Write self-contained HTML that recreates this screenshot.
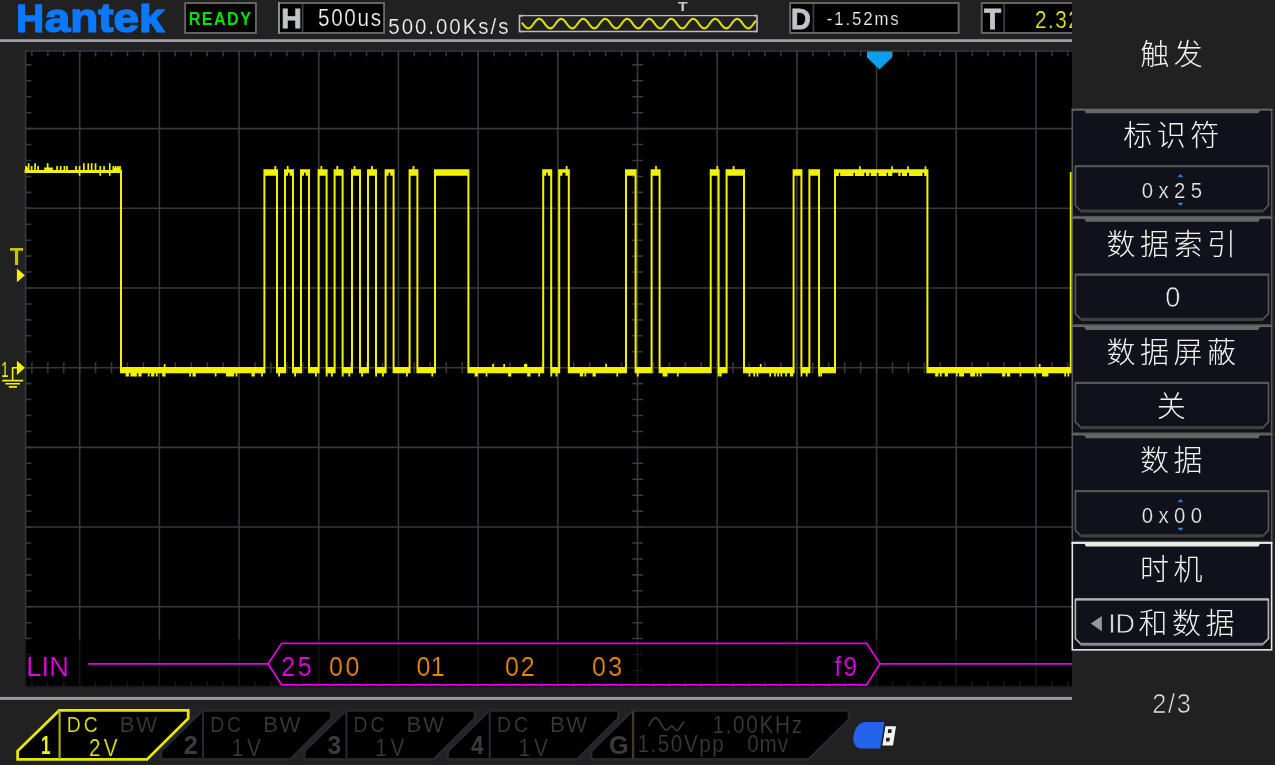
<!DOCTYPE html>
<html lang="zh">
<head>
<meta charset="utf-8">
<title>Hantek LIN trigger</title>
<style>
html,body{margin:0;padding:0;background:#212121;overflow:hidden;}
body{width:1275px;height:765px;position:relative;font-family:"Liberation Sans","Noto Sans CJK SC",sans-serif;}
svg{position:absolute;left:0;top:0;display:block;will-change:transform;}
text{font-family:"Liberation Sans","Noto Sans CJK SC",sans-serif;font-kerning:none;white-space:pre;}
.cjk{font-weight:300;fill:#f2f2f2;font-size:29px;letter-spacing:4.5px;text-anchor:middle;}
</style>
</head>
<body>
<svg width="1275" height="765" viewBox="0 0 1275 765">

<rect x="0" y="0" width="1275" height="765" fill="#212121"/>
<rect x="25.6" y="50.9" width="1046.4" height="635.4" fill="#000"/>
<g stroke="#37393d" stroke-width="1.55" fill="none">
<line x1="79.69" y1="50.9" x2="79.69" y2="686.3"/>
<line x1="159.38" y1="50.9" x2="159.38" y2="686.3"/>
<line x1="239.06" y1="50.9" x2="239.06" y2="686.3"/>
<line x1="318.75" y1="50.9" x2="318.75" y2="686.3"/>
<line x1="398.44" y1="50.9" x2="398.44" y2="686.3"/>
<line x1="478.12" y1="50.9" x2="478.12" y2="686.3"/>
<line x1="557.81" y1="50.9" x2="557.81" y2="686.3"/>
<line x1="637.50" y1="50.9" x2="637.50" y2="686.3"/>
<line x1="717.19" y1="50.9" x2="717.19" y2="686.3"/>
<line x1="796.88" y1="50.9" x2="796.88" y2="686.3"/>
<line x1="876.56" y1="50.9" x2="876.56" y2="686.3"/>
<line x1="956.25" y1="50.9" x2="956.25" y2="686.3"/>
<line x1="1035.94" y1="50.9" x2="1035.94" y2="686.3"/>
<line x1="25.6" y1="128.64" x2="1072" y2="128.64"/>
<line x1="25.6" y1="208.32" x2="1072" y2="208.32"/>
<line x1="25.6" y1="288.01" x2="1072" y2="288.01"/>
<line x1="25.6" y1="367.70" x2="1072" y2="367.70"/>
<line x1="25.6" y1="447.39" x2="1072" y2="447.39"/>
<line x1="25.6" y1="527.08" x2="1072" y2="527.08"/>
<line x1="25.6" y1="606.76" x2="1072" y2="606.76"/>
<line x1="25.6" y1="50.9" x2="1072" y2="50.9"/>
<line x1="25.6" y1="686.3" x2="1072" y2="686.3"/>
<line x1="25.6" y1="50.1" x2="25.6" y2="687.0999999999999"/>
<path d="M31.88 50.9v5.5M31.88 686.3v-5.2M31.88 362.2v11M47.81 50.9v5.5M47.81 686.3v-5.2M47.81 362.2v11M63.75 50.9v5.5M63.75 686.3v-5.2M63.75 362.2v11M79.69 50.9v5.5M79.69 686.3v-5.2M79.69 362.2v11M95.62 50.9v5.5M95.62 686.3v-5.2M95.62 362.2v11M111.56 50.9v5.5M111.56 686.3v-5.2M111.56 362.2v11M127.50 50.9v5.5M127.50 686.3v-5.2M127.50 362.2v11M143.44 50.9v5.5M143.44 686.3v-5.2M143.44 362.2v11M159.38 50.9v5.5M159.38 686.3v-5.2M159.38 362.2v11M175.31 50.9v5.5M175.31 686.3v-5.2M175.31 362.2v11M191.25 50.9v5.5M191.25 686.3v-5.2M191.25 362.2v11M207.19 50.9v5.5M207.19 686.3v-5.2M207.19 362.2v11M223.12 50.9v5.5M223.12 686.3v-5.2M223.12 362.2v11M239.06 50.9v5.5M239.06 686.3v-5.2M239.06 362.2v11M255.00 50.9v5.5M255.00 686.3v-5.2M255.00 362.2v11M270.94 50.9v5.5M270.94 686.3v-5.2M270.94 362.2v11M286.88 50.9v5.5M286.88 686.3v-5.2M286.88 362.2v11M302.81 50.9v5.5M302.81 686.3v-5.2M302.81 362.2v11M318.75 50.9v5.5M318.75 686.3v-5.2M318.75 362.2v11M334.69 50.9v5.5M334.69 686.3v-5.2M334.69 362.2v11M350.62 50.9v5.5M350.62 686.3v-5.2M350.62 362.2v11M366.56 50.9v5.5M366.56 686.3v-5.2M366.56 362.2v11M382.50 50.9v5.5M382.50 686.3v-5.2M382.50 362.2v11M398.44 50.9v5.5M398.44 686.3v-5.2M398.44 362.2v11M414.38 50.9v5.5M414.38 686.3v-5.2M414.38 362.2v11M430.31 50.9v5.5M430.31 686.3v-5.2M430.31 362.2v11M446.25 50.9v5.5M446.25 686.3v-5.2M446.25 362.2v11M462.19 50.9v5.5M462.19 686.3v-5.2M462.19 362.2v11M478.12 50.9v5.5M478.12 686.3v-5.2M478.12 362.2v11M494.06 50.9v5.5M494.06 686.3v-5.2M494.06 362.2v11M510.00 50.9v5.5M510.00 686.3v-5.2M510.00 362.2v11M525.94 50.9v5.5M525.94 686.3v-5.2M525.94 362.2v11M541.88 50.9v5.5M541.88 686.3v-5.2M541.88 362.2v11M557.81 50.9v5.5M557.81 686.3v-5.2M557.81 362.2v11M573.75 50.9v5.5M573.75 686.3v-5.2M573.75 362.2v11M589.69 50.9v5.5M589.69 686.3v-5.2M589.69 362.2v11M605.62 50.9v5.5M605.62 686.3v-5.2M605.62 362.2v11M621.56 50.9v5.5M621.56 686.3v-5.2M621.56 362.2v11M637.50 50.9v5.5M637.50 686.3v-5.2M637.50 362.2v11M653.44 50.9v5.5M653.44 686.3v-5.2M653.44 362.2v11M669.38 50.9v5.5M669.38 686.3v-5.2M669.38 362.2v11M685.31 50.9v5.5M685.31 686.3v-5.2M685.31 362.2v11M701.25 50.9v5.5M701.25 686.3v-5.2M701.25 362.2v11M717.19 50.9v5.5M717.19 686.3v-5.2M717.19 362.2v11M733.12 50.9v5.5M733.12 686.3v-5.2M733.12 362.2v11M749.06 50.9v5.5M749.06 686.3v-5.2M749.06 362.2v11M765.00 50.9v5.5M765.00 686.3v-5.2M765.00 362.2v11M780.94 50.9v5.5M780.94 686.3v-5.2M780.94 362.2v11M796.88 50.9v5.5M796.88 686.3v-5.2M796.88 362.2v11M812.81 50.9v5.5M812.81 686.3v-5.2M812.81 362.2v11M828.75 50.9v5.5M828.75 686.3v-5.2M828.75 362.2v11M844.69 50.9v5.5M844.69 686.3v-5.2M844.69 362.2v11M860.62 50.9v5.5M860.62 686.3v-5.2M860.62 362.2v11M876.56 50.9v5.5M876.56 686.3v-5.2M876.56 362.2v11M892.50 50.9v5.5M892.50 686.3v-5.2M892.50 362.2v11M908.44 50.9v5.5M908.44 686.3v-5.2M908.44 362.2v11M924.38 50.9v5.5M924.38 686.3v-5.2M924.38 362.2v11M940.31 50.9v5.5M940.31 686.3v-5.2M940.31 362.2v11M956.25 50.9v5.5M956.25 686.3v-5.2M956.25 362.2v11M972.19 50.9v5.5M972.19 686.3v-5.2M972.19 362.2v11M988.12 50.9v5.5M988.12 686.3v-5.2M988.12 362.2v11M1004.06 50.9v5.5M1004.06 686.3v-5.2M1004.06 362.2v11M1020.00 50.9v5.5M1020.00 686.3v-5.2M1020.00 362.2v11M1035.94 50.9v5.5M1035.94 686.3v-5.2M1035.94 362.2v11M1051.88 50.9v5.5M1051.88 686.3v-5.2M1051.88 362.2v11M1067.81 50.9v5.5M1067.81 686.3v-5.2M1067.81 362.2v11M25.6 64.89h5.8M632.1 64.89h10.8M25.6 80.82h5.8M632.1 80.82h10.8M25.6 96.76h5.8M632.1 96.76h10.8M25.6 112.70h5.8M632.1 112.70h10.8M25.6 128.64h5.8M632.1 128.64h10.8M25.6 144.57h5.8M632.1 144.57h10.8M25.6 160.51h5.8M632.1 160.51h10.8M25.6 176.45h5.8M632.1 176.45h10.8M25.6 192.39h5.8M632.1 192.39h10.8M25.6 208.32h5.8M632.1 208.32h10.8M25.6 224.26h5.8M632.1 224.26h10.8M25.6 240.20h5.8M632.1 240.20h10.8M25.6 256.14h5.8M632.1 256.14h10.8M25.6 272.07h5.8M632.1 272.07h10.8M25.6 288.01h5.8M632.1 288.01h10.8M25.6 303.95h5.8M632.1 303.95h10.8M25.6 319.89h5.8M632.1 319.89h10.8M25.6 335.82h5.8M632.1 335.82h10.8M25.6 351.76h5.8M632.1 351.76h10.8M25.6 367.70h5.8M632.1 367.70h10.8M25.6 383.64h5.8M632.1 383.64h10.8M25.6 399.57h5.8M632.1 399.57h10.8M25.6 415.51h5.8M632.1 415.51h10.8M25.6 431.45h5.8M632.1 431.45h10.8M25.6 447.39h5.8M632.1 447.39h10.8M25.6 463.32h5.8M632.1 463.32h10.8M25.6 479.26h5.8M632.1 479.26h10.8M25.6 495.20h5.8M632.1 495.20h10.8M25.6 511.14h5.8M632.1 511.14h10.8M25.6 527.08h5.8M632.1 527.08h10.8M25.6 543.01h5.8M632.1 543.01h10.8M25.6 558.95h5.8M632.1 558.95h10.8M25.6 574.89h5.8M632.1 574.89h10.8M25.6 590.83h5.8M632.1 590.83h10.8M25.6 606.76h5.8M632.1 606.76h10.8M25.6 622.70h5.8M632.1 622.70h10.8M25.6 638.64h5.8M632.1 638.64h10.8M25.6 654.58h5.8M632.1 654.58h10.8M25.6 670.51h5.8M632.1 670.51h10.8"/>
</g>
<rect x="24.8" y="639.2" width="1047.2" height="47.9" fill="#000" opacity="0.6"/>
<path fill="#f2f200" d="M24.6 170.1h97.4v2.9h-97.4zM27.8 163.3h1.7v7.0h-1.7zM34.2 163.3h1.7v7.0h-1.7zM46.8 163.3h1.7v7.0h-1.7zM83.0 163.3h1.7v7.0h-1.7zM87.4 163.3h1.7v7.0h-1.7zM90.8 163.3h1.7v7.0h-1.7zM94.7 163.3h1.7v7.0h-1.7zM108.9 163.3h1.7v7.0h-1.7zM25.3 165.9h1.7v4.4h-1.7zM30.8 165.9h1.7v4.4h-1.7zM37.2 165.9h1.7v4.4h-1.7zM56.2 165.9h1.7v4.4h-1.7zM59.8 165.9h1.7v4.4h-1.7zM63.6 165.9h1.7v4.4h-1.7zM66.2 165.9h1.7v4.4h-1.7zM75.2 165.9h1.7v4.4h-1.7zM78.7 165.9h1.7v4.4h-1.7zM99.4 165.9h1.7v4.4h-1.7zM103.2 165.9h1.7v4.4h-1.7zM112.4 165.9h1.7v4.4h-1.7zM114.8 165.9h1.7v4.4h-1.7zM117.2 165.9h1.7v4.4h-1.7zM119.2 165.9h1.7v4.4h-1.7zM44.2 167.4h8.6v2.9h-8.6zM112.4 167.4h8.0v2.9h-8.0zM25.0 167.4h4.4v2.9h-4.4zM78.7 172.8h1.7v3.0h-1.7zM99.4 172.8h1.7v3.0h-1.7zM108.9 172.8h1.7v3.0h-1.7zM120.0 367.1h145.4v6.1h-145.4zM125.6 373.0h1.7v3.4h-1.7zM127.2 373.0h1.7v3.4h-1.7zM130.4 373.0h1.7v3.4h-1.7zM132.0 373.0h1.7v3.4h-1.7zM133.6 373.0h1.7v3.4h-1.7zM135.2 373.0h1.7v3.4h-1.7zM138.3 373.0h1.7v3.4h-1.7zM139.9 373.0h1.7v3.4h-1.7zM147.9 373.0h1.7v3.4h-1.7zM151.1 373.0h1.7v3.4h-1.7zM152.7 373.0h1.7v3.4h-1.7zM155.9 373.0h1.7v3.4h-1.7zM162.2 373.0h1.7v3.4h-1.7zM163.8 373.0h1.7v3.4h-1.7zM163.8 363.9h1.7v3.4h-1.7zM189.3 373.0h1.7v3.4h-1.7zM192.5 373.0h1.7v3.4h-1.7zM194.1 373.0h1.7v3.4h-1.7zM214.8 373.0h1.7v3.4h-1.7zM226.0 373.0h1.7v3.4h-1.7zM227.6 373.0h1.7v3.4h-1.7zM229.2 373.0h1.7v3.4h-1.7zM229.2 373.0h1.7v3.4h-1.7zM230.8 373.0h1.7v3.4h-1.7zM232.4 373.0h1.7v3.4h-1.7zM235.6 373.0h1.7v3.4h-1.7zM251.5 373.0h1.7v3.4h-1.7zM253.1 373.0h1.7v3.4h-1.7zM261.1 373.0h1.7v3.4h-1.7zM263.4 169.3h14.6v3.4h-14.6zM263.4 172.5h14.6v3.2h-14.6zM274.4 166.1h1.8v3.4h-1.8zM276.0 367.1h10.0v6.1h-10.0zM278.2 373.0h1.8v3.4h-1.8zM284.0 169.3h10.0v3.4h-10.0zM284.0 172.5h4.0v3.2h-4.0zM289.6 172.5h4.4v3.2h-4.4zM288.0 169.3h3.0v1.2h-3.0zM286.8 166.1h1.8v3.4h-1.8zM292.0 367.1h10.0v6.1h-10.0zM294.2 373.0h1.8v3.4h-1.8zM300.0 169.3h10.0v3.4h-10.0zM300.0 172.5h4.0v3.2h-4.0zM305.6 172.5h4.4v3.2h-4.4zM304.0 169.3h3.0v1.2h-3.0zM308.0 367.1h11.6v6.1h-11.6zM315.0 373.0h1.8v3.4h-1.8zM317.6 169.3h10.0v3.4h-10.0zM317.6 172.5h10.0v3.2h-10.0zM320.5 166.1h1.8v3.4h-1.8zM325.6 367.1h10.0v6.1h-10.0zM331.0 373.0h1.8v3.4h-1.8zM325.8 373.0h1.8v3.4h-1.8zM333.6 169.3h10.0v3.4h-10.0zM333.6 172.5h10.0v3.2h-10.0zM336.4 166.1h1.8v3.4h-1.8zM341.6 367.1h11.4v6.1h-11.4zM348.4 373.0h1.8v3.4h-1.8zM341.8 373.0h1.8v3.4h-1.8zM351.0 169.3h10.0v3.4h-10.0zM351.0 172.5h10.0v3.2h-10.0zM353.7 166.1h1.8v3.4h-1.8zM359.0 367.1h10.0v6.1h-10.0zM361.2 373.0h1.8v3.4h-1.8zM367.0 169.3h10.0v3.4h-10.0zM367.0 172.5h10.0v3.2h-10.0zM371.1 166.1h1.8v3.4h-1.8zM375.0 367.1h11.6v6.1h-11.6zM382.0 373.0h1.8v3.4h-1.8zM375.2 373.0h1.8v3.4h-1.8zM384.6 169.3h10.0v3.4h-10.0zM384.6 172.5h4.0v3.2h-4.0zM390.2 172.5h4.4v3.2h-4.4zM388.6 169.3h3.0v1.2h-3.0zM392.6 367.1h18.0v6.1h-18.0zM406.0 373.0h1.8v3.4h-1.8zM408.6 169.3h9.8v3.4h-9.8zM408.6 172.5h9.8v3.2h-9.8zM412.6 166.1h1.8v3.4h-1.8zM416.4 367.1h19.6v6.1h-19.6zM431.4 373.0h1.8v3.4h-1.8zM434.0 169.3h35.4v3.4h-35.4zM434.0 172.5h35.4v3.2h-35.4zM467.4 367.1h76.8v6.1h-76.8zM474.6 373.0h1.7v3.4h-1.7zM476.2 373.0h1.7v3.4h-1.7zM485.7 373.0h1.7v3.4h-1.7zM492.1 363.9h1.7v3.4h-1.7zM503.3 363.9h1.7v3.4h-1.7zM508.1 373.0h1.7v3.4h-1.7zM509.6 373.0h1.7v3.4h-1.7zM524.0 363.9h1.7v3.4h-1.7zM525.6 363.9h1.7v3.4h-1.7zM527.2 373.0h1.7v3.4h-1.7zM528.8 373.0h1.7v3.4h-1.7zM538.3 373.0h1.7v3.4h-1.7zM542.2 169.3h10.0v3.4h-10.0zM542.2 172.5h4.0v3.2h-4.0zM547.8 172.5h4.4v3.2h-4.4zM546.2 169.3h3.0v1.2h-3.0zM550.2 367.1h10.0v6.1h-10.0zM555.6 373.0h1.8v3.4h-1.8zM550.4 373.0h1.8v3.4h-1.8zM558.2 169.3h11.6v3.4h-11.6zM558.2 172.5h4.2v3.2h-4.2zM565.4 172.5h4.4v3.2h-4.4zM562.2 169.3h4.6v1.2h-4.6zM565.7 166.1h1.8v3.4h-1.8zM567.8 367.1h59.2v6.1h-59.2zM579.8 373.0h1.7v3.4h-1.7zM581.4 373.0h1.7v3.4h-1.7zM581.4 373.0h1.7v3.4h-1.7zM584.5 373.0h1.7v3.4h-1.7zM592.5 373.0h1.7v3.4h-1.7zM594.1 373.0h1.7v3.4h-1.7zM605.3 363.9h1.7v3.4h-1.7zM616.4 373.0h1.7v3.4h-1.7zM625.0 169.3h11.6v3.4h-11.6zM625.0 172.5h11.6v3.2h-11.6zM634.6 367.1h18.0v6.1h-18.0zM636.8 373.0h1.8v3.4h-1.8zM650.6 169.3h10.0v3.4h-10.0zM650.6 172.5h10.0v3.2h-10.0zM655.1 166.1h1.8v3.4h-1.8zM658.6 367.1h53.1v6.1h-53.1zM662.6 373.0h1.7v3.4h-1.7zM664.2 373.0h1.7v3.4h-1.7zM665.8 373.0h1.7v3.4h-1.7zM676.9 373.0h1.7v3.4h-1.7zM709.7 169.3h9.9v3.4h-9.9zM709.7 172.5h9.9v3.2h-9.9zM716.4 166.1h1.8v3.4h-1.8zM717.6 367.1h10.0v6.1h-10.0zM719.8 373.0h1.8v3.4h-1.8zM717.8 373.0h1.8v3.4h-1.8zM725.6 169.3h19.4v3.4h-19.4zM725.6 172.5h19.4v3.2h-19.4zM732.7 166.1h1.8v3.4h-1.8zM743.0 367.1h51.6v6.1h-51.6zM748.6 373.0h1.7v3.4h-1.7zM753.4 373.0h1.7v3.4h-1.7zM756.6 373.0h1.7v3.4h-1.7zM759.8 363.9h1.7v3.4h-1.7zM769.3 373.0h1.7v3.4h-1.7zM774.1 373.0h1.7v3.4h-1.7zM777.3 373.0h1.7v3.4h-1.7zM780.5 373.0h1.7v3.4h-1.7zM785.2 373.0h1.7v3.4h-1.7zM790.0 373.0h1.7v3.4h-1.7zM791.6 373.0h1.7v3.4h-1.7zM792.6 169.3h9.8v3.4h-9.8zM792.6 172.5h9.8v3.2h-9.8zM800.4 367.1h10.0v6.1h-10.0zM805.8 373.0h1.8v3.4h-1.8zM800.6 373.0h1.8v3.4h-1.8zM808.4 169.3h11.6v3.4h-11.6zM808.4 172.5h11.6v3.2h-11.6zM818.0 367.1h18.0v6.1h-18.0zM820.2 373.0h1.8v3.4h-1.8zM818.2 373.0h1.8v3.4h-1.8zM834.0 169.3h94.4v3.4h-94.4zM834.0 172.5h4.8v3.4h-4.8zM840.2 172.5h13.3v3.4h-13.3zM854.9 172.5h9.4v3.4h-9.4zM866.0 172.5h3.4v3.4h-3.4zM870.8 172.5h6.0v3.4h-6.0zM878.5 172.5h8.2v3.4h-8.2zM888.1 172.5h4.2v3.4h-4.2zM898.3 172.5h2.2v3.4h-2.2zM901.9 172.5h5.1v3.4h-5.1zM909.1 172.5h13.4v3.4h-13.4zM924.2 172.5h4.2v3.4h-4.2zM859.0 166.2h1.7v3.3h-1.7zM891.2 166.2h1.7v3.3h-1.7zM907.1 166.2h1.7v3.3h-1.7zM924.6 166.2h1.7v3.3h-1.7zM926.4 367.1h145.4v6.1h-145.4zM935.2 373.0h1.7v3.4h-1.7zM936.8 373.0h1.7v3.4h-1.7zM940.0 373.0h1.7v3.4h-1.7zM944.7 373.0h1.7v3.4h-1.7zM946.3 373.0h1.7v3.4h-1.7zM955.9 373.0h1.7v3.4h-1.7zM959.1 373.0h1.7v3.4h-1.7zM960.7 373.0h1.7v3.4h-1.7zM960.7 373.0h1.7v3.4h-1.7zM962.3 373.0h1.7v3.4h-1.7zM970.2 373.0h1.7v3.4h-1.7zM971.8 373.0h1.7v3.4h-1.7zM973.4 373.0h1.7v3.4h-1.7zM973.4 373.0h1.7v3.4h-1.7zM976.6 373.0h1.7v3.4h-1.7zM979.8 373.0h1.7v3.4h-1.7zM1002.1 373.0h1.7v3.4h-1.7zM1003.7 373.0h1.7v3.4h-1.7zM1003.7 373.0h1.7v3.4h-1.7zM1006.9 373.0h1.7v3.4h-1.7zM1008.5 373.0h1.7v3.4h-1.7zM1019.6 373.0h1.7v3.4h-1.7zM1034.0 373.0h1.7v3.4h-1.7zM1038.8 363.9h1.7v3.4h-1.7zM1042.0 373.0h1.7v3.4h-1.7zM1043.6 373.0h1.7v3.4h-1.7zM1043.6 373.0h1.7v3.4h-1.7zM1045.2 373.0h1.7v3.4h-1.7zM1046.7 373.0h1.7v3.4h-1.7zM1064.3 373.0h1.7v3.4h-1.7zM1067.5 373.0h1.7v3.4h-1.7zM120.0 170.1h2.0v203.1h-2.0zM263.4 169.3h2.0v203.9h-2.0zM276.0 169.3h2.0v203.9h-2.0zM284.0 169.3h2.0v203.9h-2.0zM292.0 169.3h2.0v203.9h-2.0zM300.0 169.3h2.0v203.9h-2.0zM308.0 169.3h2.0v203.9h-2.0zM317.6 169.3h2.0v203.9h-2.0zM325.6 169.3h2.0v203.9h-2.0zM333.6 169.3h2.0v203.9h-2.0zM341.6 169.3h2.0v203.9h-2.0zM351.0 169.3h2.0v203.9h-2.0zM359.0 169.3h2.0v203.9h-2.0zM367.0 169.3h2.0v203.9h-2.0zM375.0 169.3h2.0v203.9h-2.0zM384.6 169.3h2.0v203.9h-2.0zM392.6 169.3h2.0v203.9h-2.0zM408.6 169.3h2.0v203.9h-2.0zM416.4 169.3h2.0v203.9h-2.0zM434.0 169.3h2.0v203.9h-2.0zM467.4 169.3h2.0v203.9h-2.0zM542.2 169.3h2.0v203.9h-2.0zM550.2 169.3h2.0v203.9h-2.0zM558.2 169.3h2.0v203.9h-2.0zM567.8 169.3h2.0v203.9h-2.0zM625.0 169.3h2.0v203.9h-2.0zM634.6 169.3h2.0v203.9h-2.0zM650.6 169.3h2.0v203.9h-2.0zM658.6 169.3h2.0v203.9h-2.0zM709.7 169.3h2.0v203.9h-2.0zM717.6 169.3h2.0v203.9h-2.0zM725.6 169.3h2.0v203.9h-2.0zM743.0 169.3h2.0v203.9h-2.0zM792.6 169.3h2.0v203.9h-2.0zM800.4 169.3h2.0v203.9h-2.0zM808.4 169.3h2.0v203.9h-2.0zM818.0 169.3h2.0v203.9h-2.0zM834.0 169.3h2.0v203.9h-2.0zM926.4 169.3h2.0v203.9h-2.0zM1069.8 172.0h2.0v201.2h-2.0z"/>
<path d="M88.3 663.8H268L281.7 643.4H866.6L880 663.8L866.6 684.8H281.7L268 663.8M880 663.8H1072" stroke="#e400e4" stroke-width="1.7" fill="none"/>
<text transform="translate(26.37,676.00) scale(1.0000,1)" font-size="27.20" letter-spacing="0.061" fill="#e400e4" stroke="#000" stroke-width="0.22">LIN</text>
<text transform="translate(281.34,676.00) scale(0.9200,1)" font-size="27.20" letter-spacing="2.690" fill="#e400e4" stroke="#000" stroke-width="0.22">25</text>
<text transform="translate(329.02,676.00) scale(0.9200,1)" font-size="27.20" letter-spacing="2.740" fill="#e88a00" stroke="#000" stroke-width="0.22">00</text>
<text transform="translate(416.62,676.00) scale(0.9200,1)" font-size="27.20" letter-spacing="0.288" fill="#e88a00" stroke="#000" stroke-width="0.22">01</text>
<text transform="translate(504.92,676.00) scale(0.9200,1)" font-size="27.20" letter-spacing="2.067" fill="#e88a00" stroke="#000" stroke-width="0.22">02</text>
<text transform="translate(592.02,676.00) scale(0.9200,1)" font-size="27.20" letter-spacing="2.655" fill="#e88a00" stroke="#000" stroke-width="0.22">03</text>
<text transform="translate(834.45,676.00) scale(0.9200,1)" font-size="27.20" letter-spacing="2.033" fill="#e400e4" stroke="#000" stroke-width="0.22">f9</text>
<text transform="translate(9.75,264.90) scale(0.9507,1)" font-size="23.40" letter-spacing="0.000" fill="#c6c600" font-weight="bold">T</text>
<path d="M16.9 268.4L24.9 275.3L16.9 282.2Z" fill="#f2f200"/>
<path d="M16.9 360.8L24.9 367.8L16.9 374.9Z" fill="#f2f200"/>
<path d="M12.6 380V367.8H17.5M2.2 380.6H23.1M5.3 383.8H20M8.8 386.9H16.9" stroke="#f2f200" stroke-width="1.6" fill="none"/>
<text transform="translate(1.21,376.70) scale(0.6013,1)" font-size="21.60" letter-spacing="0.000" fill="#f2f200">1</text>
<rect x="0" y="39.2" width="1072" height="2.8" fill="#9e9ea2"/>
<clipPath id="lg"><rect x="0" y="3.5" width="180" height="29.2"/></clipPath>
<g clip-path="url(#lg)">
<text y="31.7" font-weight="bold" fill="#0a78ff" stroke="#0a78ff" stroke-width="1.5" stroke-linejoin="miter"><tspan x="16.23" font-size="39.6" textLength="27.76" lengthAdjust="spacingAndGlyphs">H</tspan><tspan x="44.86" font-size="41.5" textLength="119.70" lengthAdjust="spacingAndGlyphs">antek</tspan></text>
</g>
<rect x="185.15" y="3.05" width="70.80" height="29.9" fill="#000" stroke="#666864" stroke-width="1.9"/>
<text transform="translate(188.72,24.80) scale(0.8600,1)" font-size="18.80" letter-spacing="1.641" fill="#00e200" font-weight="bold">READY</text>
<rect x="278.95" y="3.05" width="105.10" height="29.9" fill="#000" stroke="#666864" stroke-width="1.9"/>
<line x1="302.6" y1="4" x2="302.6" y2="32" stroke="#3a3c40" stroke-width="1.8"/>
<rect x="278" y="2.1" width="2" height="31.8" fill="#8a8e88"/>
<text transform="translate(281.20,27.90) scale(1.0073,1)" font-size="28.20" letter-spacing="0.000" fill="#c2c4c6" font-weight="bold" stroke="#c2c4c6" stroke-width="0.8">H</text>
<text transform="translate(317.97,25.90) scale(0.9000,1)" font-size="23.00" letter-spacing="1.855" fill="#f2f2f2" stroke="#000" stroke-width="0.22">500us</text>
<text transform="translate(388.28,33.70) scale(0.9000,1)" font-size="22.80" letter-spacing="2.172" fill="#f2f2f2" stroke="#212121" stroke-width="0.22">500.00Ks/s</text>
<path d="M523 15.6H519.5V31.5H523M754 15.6H757V31.5H754" stroke="#c0c0c0" stroke-width="1.6" fill="none"/>
<path d="M519.5 15.6H757M519.5 31.5H757" stroke="#bcbcbc" stroke-width="1.4" fill="none"/>
<polyline points="522.0,22.65 523.0,24.01 524.0,25.34 525.0,26.53 526.0,27.48 527.0,28.12 528.0,28.39 529.0,28.28 530.0,27.78 531.0,26.95 532.0,25.84 533.0,24.55 534.0,23.19 535.0,21.86 536.0,20.67 537.0,19.72 538.0,19.08 539.0,18.81 540.0,18.92 541.0,19.42 542.0,20.25 543.0,21.36 544.0,22.65 545.0,24.01 546.0,25.34 547.0,26.53 548.0,27.48 549.0,28.12 550.0,28.39 551.0,28.28 552.0,27.78 553.0,26.95 554.0,25.84 555.0,24.55 556.0,23.19 557.0,21.86 558.0,20.67 559.0,19.72 560.0,19.08 561.0,18.81 562.0,18.92 563.0,19.42 564.0,20.25 565.0,21.36 566.0,22.65 567.0,24.01 568.0,25.34 569.0,26.53 570.0,27.48 571.0,28.12 572.0,28.39 573.0,28.28 574.0,27.78 575.0,26.95 576.0,25.84 577.0,24.55 578.0,23.19 579.0,21.86 580.0,20.67 581.0,19.72 582.0,19.08 583.0,18.81 584.0,18.92 585.0,19.42 586.0,20.25 587.0,21.36 588.0,22.65 589.0,24.01 590.0,25.34 591.0,26.53 592.0,27.48 593.0,28.12 594.0,28.39 595.0,28.28 596.0,27.78 597.0,26.95 598.0,25.84 599.0,24.55 600.0,23.19 601.0,21.86 602.0,20.67 603.0,19.72 604.0,19.08 605.0,18.81 606.0,18.92 607.0,19.42 608.0,20.25 609.0,21.36 610.0,22.65 611.0,24.01 612.0,25.34 613.0,26.53 614.0,27.48 615.0,28.12 616.0,28.39 617.0,28.28 618.0,27.78 619.0,26.95 620.0,25.84 621.0,24.55 622.0,23.19 623.0,21.86 624.0,20.67 625.0,19.72 626.0,19.08 627.0,18.81 628.0,18.92 629.0,19.42 630.0,20.25 631.0,21.36 632.0,22.65 633.0,24.01 634.0,25.34 635.0,26.53 636.0,27.48 637.0,28.12 638.0,28.39 639.0,28.28 640.0,27.78 641.0,26.95 642.0,25.84 643.0,24.55 644.0,23.19 645.0,21.86 646.0,20.67 647.0,19.72 648.0,19.08 649.0,18.81 650.0,18.92 651.0,19.42 652.0,20.25 653.0,21.36 654.0,22.65 655.0,24.01 656.0,25.34 657.0,26.53 658.0,27.48 659.0,28.12 660.0,28.39 661.0,28.28 662.0,27.78 663.0,26.95 664.0,25.84 665.0,24.55 666.0,23.19 667.0,21.86 668.0,20.67 669.0,19.72 670.0,19.08 671.0,18.81 672.0,18.92 673.0,19.42 674.0,20.25 675.0,21.36 676.0,22.65 677.0,24.01 678.0,25.34 679.0,26.53 680.0,27.48 681.0,28.12 682.0,28.39 683.0,28.28 684.0,27.78 685.0,26.95 686.0,25.84 687.0,24.55 688.0,23.19 689.0,21.86 690.0,20.67 691.0,19.72 692.0,19.08 693.0,18.81 694.0,18.92 695.0,19.42 696.0,20.25 697.0,21.36 698.0,22.65 699.0,24.01 700.0,25.34 701.0,26.53 702.0,27.48 703.0,28.12 704.0,28.39 705.0,28.28 706.0,27.78 707.0,26.95 708.0,25.84 709.0,24.55 710.0,23.19 711.0,21.86 712.0,20.67 713.0,19.72 714.0,19.08 715.0,18.81 716.0,18.92 717.0,19.42 718.0,20.25 719.0,21.36 720.0,22.65 721.0,24.01 722.0,25.34 723.0,26.53 724.0,27.48 725.0,28.12 726.0,28.39 727.0,28.28 728.0,27.78 729.0,26.95 730.0,25.84 731.0,24.55 732.0,23.19 733.0,21.86 734.0,20.67 735.0,19.72 736.0,19.08 737.0,18.81 738.0,18.92 739.0,19.42 740.0,20.25 741.0,21.36 742.0,22.65 743.0,24.01 744.0,25.34 745.0,26.53 746.0,27.48 747.0,28.12 748.0,28.39 749.0,28.28 750.0,27.78 751.0,26.95 752.0,25.84 753.0,24.55 754.0,23.19 755.0,21.86 756.0,20.67" stroke="#dede00" stroke-width="2.1" fill="none"/>
<text transform="translate(677.82,11.30) scale(1.1987,1)" font-size="13.60" letter-spacing="0.000" fill="#c8c8c8" font-weight="bold">T</text>
<rect x="790.15" y="3.05" width="168.50" height="29.9" fill="#000" stroke="#666864" stroke-width="1.9"/>
<line x1="813.4" y1="4" x2="813.4" y2="32" stroke="#3a3c40" stroke-width="1.8"/>
<text transform="translate(791.07,28.90) scale(0.9446,1)" font-size="29.00" letter-spacing="0.000" fill="#c2c4c6" font-weight="bold" stroke="#c2c4c6" stroke-width="0.8">D</text>
<text transform="translate(826.86,24.50) scale(0.9000,1)" font-size="18.60" letter-spacing="2.089" fill="#f2f2f2" stroke="#000" stroke-width="0.22">-1.52ms</text>
<rect x="981.75" y="3.05" width="107.30" height="29.9" fill="#000" stroke="#666864" stroke-width="1.9"/>
<line x1="1004.2" y1="4" x2="1004.2" y2="32" stroke="#3a3c40" stroke-width="1.8"/>
<text transform="translate(984.09,28.90) scale(0.9662,1)" font-size="29.00" letter-spacing="0.000" fill="#c2c4c6" font-weight="bold" stroke="#c2c4c6" stroke-width="0.8">T</text>
<text transform="translate(1034.96,27.70) scale(0.9000,1)" font-size="23.00" letter-spacing="1.677" fill="#e8e800" stroke="#000" stroke-width="0.22">2.32V</text>
<path d="M867 51.4H892V57.5L879.5 69.6L867 57.5Z" fill="#0aa0ec"/>
<rect x="0" y="696.9" width="1072" height="3" fill="#98989c"/>
<path d="M489.4 710.4H618.4V718.4L577.2 759.4H447.8V751L489.4 710.4Z" fill="#000" stroke="#26282b" stroke-width="2.6" stroke-linejoin="miter"/>
<line x1="489.8" y1="711" x2="489.8" y2="759" stroke="#26282b" stroke-width="2.2"/>
<text transform="translate(471.06,754.00) scale(0.8693,1)" font-size="26.20" letter-spacing="0.000" fill="#3b3b3b" font-weight="bold">4</text>
<text transform="translate(497.01,732.00) scale(0.8600,1)" font-size="22.60" letter-spacing="3.328" fill="#3b3b3b" stroke="#000" stroke-width="0.22">DC</text>
<text transform="translate(549.98,732.00) scale(0.9800,1)" font-size="22.60" letter-spacing="1.649" fill="#3b3b3b" stroke="#000" stroke-width="0.22">BW</text>
<text transform="translate(518.62,756.00) scale(0.9000,1)" font-size="23.00" letter-spacing="4.165" fill="#3b3b3b" stroke="#000" stroke-width="0.22">1V</text>
<path d="M346.0 710.4H475.0V718.4L433.8 759.4H304.4V751L346.0 710.4Z" fill="#000" stroke="#26282b" stroke-width="2.6" stroke-linejoin="miter"/>
<line x1="346.4" y1="711" x2="346.4" y2="759" stroke="#26282b" stroke-width="2.2"/>
<text transform="translate(327.44,754.00) scale(0.9368,1)" font-size="26.20" letter-spacing="0.000" fill="#3b3b3b" font-weight="bold">3</text>
<text transform="translate(353.61,732.00) scale(0.8600,1)" font-size="22.60" letter-spacing="3.328" fill="#3b3b3b" stroke="#000" stroke-width="0.22">DC</text>
<text transform="translate(406.58,732.00) scale(0.9800,1)" font-size="22.60" letter-spacing="1.649" fill="#3b3b3b" stroke="#000" stroke-width="0.22">BW</text>
<text transform="translate(375.22,756.00) scale(0.9000,1)" font-size="23.00" letter-spacing="4.165" fill="#3b3b3b" stroke="#000" stroke-width="0.22">1V</text>
<path d="M202.6 710.4H331.6V718.4L290.4 759.4H161.0V751L202.6 710.4Z" fill="#000" stroke="#26282b" stroke-width="2.6" stroke-linejoin="miter"/>
<line x1="203.0" y1="711" x2="203.0" y2="759" stroke="#26282b" stroke-width="2.2"/>
<text transform="translate(183.72,754.00) scale(0.9672,1)" font-size="26.20" letter-spacing="0.000" fill="#3b3b3b" font-weight="bold">2</text>
<text transform="translate(210.21,732.00) scale(0.8600,1)" font-size="22.60" letter-spacing="3.328" fill="#3b3b3b" stroke="#000" stroke-width="0.22">DC</text>
<text transform="translate(263.18,732.00) scale(0.9800,1)" font-size="22.60" letter-spacing="1.649" fill="#3b3b3b" stroke="#000" stroke-width="0.22">BW</text>
<text transform="translate(231.82,756.00) scale(0.9000,1)" font-size="23.00" letter-spacing="4.165" fill="#3b3b3b" stroke="#000" stroke-width="0.22">1V</text>
<path d="M632.8 710.4H849V719.6L808.4 759.4H591.2V751L632.8 710.4Z" fill="#000" stroke="#26282b" stroke-width="2.6"/>
<line x1="633.1" y1="711" x2="633.1" y2="759" stroke="#3c3c22" stroke-width="2.4"/>
<text transform="translate(608.97,753.60) scale(1.0077,1)" font-size="25.00" letter-spacing="0.000" fill="#3b3b3b" font-weight="bold">G</text>
<path d="M648.8 726.4C651 721 653.5 717.9 655.9 717.9C659.8 717.9 662 730.1 666.5 730.1C669 730.1 669.8 725.8 671.6 725.8C673.4 725.8 674.5 730.5 677 730.5C680 730.5 681 723 684.3 721.7" stroke="#3b3b3b" stroke-width="1.7" fill="none"/>
<text transform="translate(712.42,733.00) scale(0.9000,1)" font-size="23.00" letter-spacing="1.891" fill="#3b3b3b" stroke="#000" stroke-width="0.22">1.00KHz</text>
<text transform="translate(637.42,752.20) scale(0.9000,1)" font-size="23.00" letter-spacing="1.727" fill="#3b3b3b" stroke="#000" stroke-width="0.22">1.50Vpp</text>
<text transform="translate(747.19,752.20) scale(0.9000,1)" font-size="23.00" letter-spacing="0.985" fill="#3b3b3b" stroke="#000" stroke-width="0.22">0mv</text>
<path d="M59.2 710.4H188.2V718.4L147.0 759.4H17.6V751L59.2 710.4Z" fill="#000" stroke="#e6e600" stroke-width="2.8" stroke-linejoin="miter"/>
<line x1="59.6" y1="711" x2="59.6" y2="759" stroke="#a8a800" stroke-width="2.2"/>
<text transform="translate(40.92,754.00) scale(0.6562,1)" font-size="26.20" letter-spacing="0.000" fill="#f2f200" font-weight="bold">1</text>
<text transform="translate(66.81,732.00) scale(0.8600,1)" font-size="22.60" letter-spacing="3.328" fill="#e6e600" stroke="#000" stroke-width="0.22">DC</text>
<text transform="translate(119.78,732.00) scale(0.9800,1)" font-size="22.60" letter-spacing="1.649" fill="#3b3b3b" stroke="#000" stroke-width="0.22">BW</text>
<text transform="translate(88.96,756.00) scale(0.9000,1)" font-size="23.00" letter-spacing="3.570" fill="#e6e600" stroke="#000" stroke-width="0.22">2V</text>
<path d="M866 722H884.4L880.2 748.6H862C855 748.6 852.4 742 853.6 735.5C855 727 860 722 866 722Z" fill="#2363ea"/>
<path d="M885.4 726.2H896L893 745.6H882.4Z" fill="#f4f4f4"/>
<path d="M888.2 729.2H891.8L891.3 732.9H887.7ZM886.3 737.8H889.9L889.4 741.5H885.8Z" fill="#1c1c1c"/>
<rect x="1072" y="0" width="203" height="765" fill="#212121"/>
<text class="cjk" x="1173.8" y="65.4">触发</text>
<rect x="1072.3" y="109.6" width="199.3" height="540" fill="#10111a"/>
<rect x="1072.3" y="109.65" width="199.3" height="107.00" fill="#10111a" stroke="#55555b" stroke-width="1.6"/>
<path d="M1071.5 108.85H1272.4V110.45H1260L1258.4 113.35H1086L1084.4 110.45H1071.5Z" fill="#666864"/>
<path d="M1075.4 166.25H1268.4V205.45L1262.8 211.05H1081L1075.4 205.45Z" fill="none" stroke="#555855" stroke-width="1.6"/>
<path d="M1075 166.25H1268.8" stroke="#555855" stroke-width="2.2" fill="none"/>
<path d="M1080.6 211.05H1263.2" stroke="#3e403a" stroke-width="3.2" fill="none"/>
<text class="cjk" x="1173.6" y="146.35">标识符</text>
<rect x="1072.3" y="217.95" width="199.3" height="107.00" fill="#10111a" stroke="#55555b" stroke-width="1.6"/>
<path d="M1071.5 217.15H1272.4V218.75H1260L1258.4 221.65H1086L1084.4 218.75H1071.5Z" fill="#666864"/>
<path d="M1075.4 274.55H1268.4V313.75L1262.8 319.35H1081L1075.4 313.75Z" fill="none" stroke="#555855" stroke-width="1.6"/>
<path d="M1075 274.55H1268.8" stroke="#555855" stroke-width="2.2" fill="none"/>
<path d="M1080.6 319.35H1263.2" stroke="#3e403a" stroke-width="3.2" fill="none"/>
<text class="cjk" x="1173.6" y="254.65">数据索引</text>
<rect x="1072.3" y="326.25" width="199.3" height="107.00" fill="#10111a" stroke="#55555b" stroke-width="1.6"/>
<path d="M1071.5 325.45H1272.4V327.05H1260L1258.4 329.95H1086L1084.4 327.05H1071.5Z" fill="#666864"/>
<path d="M1075.4 382.85H1268.4V422.05L1262.8 427.65H1081L1075.4 422.05Z" fill="none" stroke="#555855" stroke-width="1.6"/>
<path d="M1075 382.85H1268.8" stroke="#555855" stroke-width="2.2" fill="none"/>
<path d="M1080.6 427.65H1263.2" stroke="#3e403a" stroke-width="3.2" fill="none"/>
<text class="cjk" x="1173.6" y="362.95">数据屏蔽</text>
<rect x="1072.3" y="434.55" width="199.3" height="107.00" fill="#10111a" stroke="#55555b" stroke-width="1.6"/>
<path d="M1071.5 433.75H1272.4V435.35H1260L1258.4 438.25H1086L1084.4 435.35H1071.5Z" fill="#666864"/>
<path d="M1075.4 491.15H1268.4V530.35L1262.8 535.95H1081L1075.4 530.35Z" fill="none" stroke="#555855" stroke-width="1.6"/>
<path d="M1075 491.15H1268.8" stroke="#555855" stroke-width="2.2" fill="none"/>
<path d="M1080.6 535.95H1263.2" stroke="#3e403a" stroke-width="3.2" fill="none"/>
<text class="cjk" x="1173.6" y="471.25">数据</text>
<rect x="1072.3" y="542.85" width="199.3" height="107.00" fill="#10111a" stroke="#e8e8e8" stroke-width="1.6"/>
<path d="M1071.5 542.05H1272.4V543.65H1260L1258.4 546.55H1086L1084.4 543.65H1071.5Z" fill="#ececec"/>
<path d="M1075.4 599.45H1268.4V638.65L1262.8 644.25H1081L1075.4 638.65Z" fill="none" stroke="#b4b4b4" stroke-width="1.6"/>
<path d="M1075 599.45H1268.8" stroke="#b4b4b4" stroke-width="2.2" fill="none"/>
<path d="M1080.6 644.25H1263.2" stroke="#8a8a8a" stroke-width="3.2" fill="none"/>
<text class="cjk" x="1173.6" y="579.55">时机</text>
<text transform="translate(1141.81,197.90) scale(0.9000,1)" font-size="22.60" letter-spacing="6.016" fill="#e8e8e8" stroke="#10111a" stroke-width="0.22">0x25</text>
<path d="M1178.0 176.8L1180.4 174.5L1182.8 176.8ZM1178.0 203.1L1180.4 205.4L1182.8 203.1Z" fill="#2a8cf0" stroke="#2a8cf0" stroke-width="0.6"/>
<text transform="translate(1165.24,307.00) scale(0.9509,1)" font-size="28.60" letter-spacing="0.000" fill="#f0f0f0" stroke="#10111a" stroke-width="0.7">0</text>
<text class="cjk" x="1173.4" y="417.3">关</text>
<text transform="translate(1141.81,522.90) scale(0.9000,1)" font-size="22.60" letter-spacing="5.994" fill="#e8e8e8" stroke="#10111a" stroke-width="0.22">0x00</text>
<path d="M1178.0 501.8L1180.4 499.5L1182.8 501.8ZM1178.0 528.1L1180.4 530.4L1182.8 528.1Z" fill="#2a8cf0" stroke="#2a8cf0" stroke-width="0.6"/>
<path d="M1101.8 616L1090.8 623.6L1101.8 631.2Z" fill="#9a9a9a"/>
<text class="cjk" style="text-anchor:start"><tspan x="1108.2" y="633" style="font-weight:400;font-size:27px;letter-spacing:-0.3px" stroke="#10111a" stroke-width="0.8">ID</tspan><tspan x="1138.4" y="634.2">和数据</tspan></text>
<text transform="translate(1152.32,713.00) scale(0.9200,1)" font-size="27.60" letter-spacing="1.791" fill="#e8e8e8" stroke="#212121" stroke-width="0.7">2/3</text>
</svg>
</body>
</html>
